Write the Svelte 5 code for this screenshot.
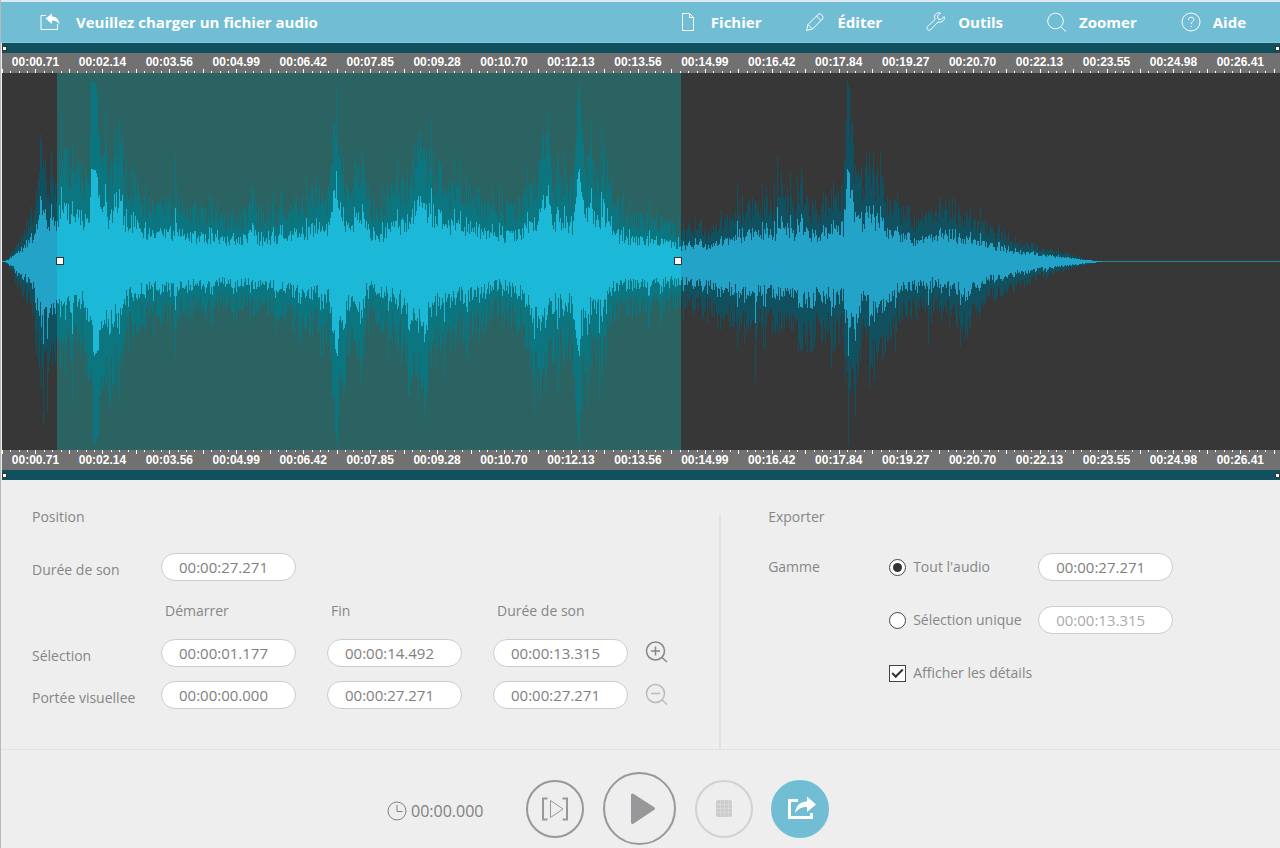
<script lang="ts">
  type Point = [number, number]

  const WIDTH = 1278
  const HEIGHT = 377
  const MIDDLE = 188

  let selection = $state({ start: 55, end: 679 })
  let range = $state('all')
  let details = $state(true)

  const menu = [
    { id: 'file', label: 'Fichier' },
    { id: 'edit', label: 'Éditer' },
    { id: 'tools', label: 'Outils' },
    { id: 'zoom', label: 'Zoomer' },
    { id: 'help', label: 'Aide' },
  ]

  const rulerLabels = [
    '00:00.71', '00:02.14', '00:03.56', '00:04.99', '00:06.42', '00:07.85', '00:09.28',
    '00:10.70', '00:12.13', '00:13.56', '00:14.99', '00:16.42', '00:17.84', '00:19.27',
    '00:20.70', '00:22.13', '00:23.55', '00:24.98', '00:26.41',
  ]

  // loudness envelope above the middle line: x, height
  const upper: Point[] = [
    [0, 0], [5, 1], [13, 7], [18, 12], [28, 26], [33, 32], [36, 56], [40, 66], [48, 44], [55, 48],
    [61, 70], [68, 60], [78, 52], [87, 48], [89, 92], [93, 91], [98, 74], [103, 62], [108, 48],
    [113, 70], [117, 74], [121, 52], [128, 44], [138, 48], [143, 34], [158, 32], [171, 32],
    [173, 54], [175, 32], [198, 29], [218, 26], [238, 24], [250, 36], [256, 25], [288, 32],
    [298, 35], [315, 38], [326, 38], [331, 72], [334, 90], [337, 70], [341, 62], [345, 36],
    [353, 48], [356, 64], [360, 56], [366, 32], [376, 28], [388, 38], [403, 46], [413, 60],
    [420, 70], [428, 58], [438, 50], [448, 42], [473, 40], [488, 30], [503, 30], [518, 34],
    [528, 44], [536, 52], [539, 80], [544, 70], [551, 46], [563, 50], [572, 42], [575, 86],
    [577, 92], [580, 68], [588, 62], [596, 48], [601, 62], [605, 54], [609, 36], [618, 28],
    [638, 24], [658, 26], [678, 18], [696, 19], [698, 28], [702, 17], [718, 22], [733, 26],
    [735, 42], [739, 30], [762, 34], [764, 42], [768, 32], [773, 33], [775, 56], [777, 33],
    [782, 44], [792, 34], [800, 40], [812, 30], [828, 38], [840, 32], [843, 54], [845, 92],
    [848, 86], [851, 68], [856, 52], [860, 38], [864, 64], [868, 60], [874, 50], [881, 44],
    [888, 27], [896, 34], [910, 22], [928, 28], [940, 26], [958, 27], [973, 24], [988, 18],
    [1008, 12], [1028, 9], [1048, 6], [1068, 4], [1083, 1], [1098, 0], [1278, 0],
  ]

  // the same below it
  const lower: Point[] = [
    [0, 0], [5, 1], [13, 9], [23, 20], [31, 34], [36, 58], [41, 66], [48, 60], [55, 54], [63, 58],
    [73, 56], [83, 44], [88, 76], [92, 94], [97, 86], [103, 68], [106, 78], [112, 62], [117, 60],
    [121, 44], [138, 36], [158, 32], [171, 32], [173, 50], [175, 30], [218, 26], [258, 27],
    [278, 32], [298, 38], [326, 40], [331, 80], [335, 94], [338, 58], [341, 80], [345, 48],
    [350, 36], [356, 60], [359, 62], [363, 34], [370, 30], [390, 44], [403, 48], [408, 82],
    [413, 58], [423, 66], [428, 60], [438, 48], [458, 42], [478, 40], [493, 28], [508, 30],
    [523, 44], [528, 62], [540, 72], [548, 50], [563, 58], [568, 44], [574, 80], [577, 94],
    [580, 62], [585, 80], [590, 46], [599, 62], [603, 54], [610, 30], [638, 28], [668, 24],
    [698, 25], [718, 30], [735, 36], [737, 50], [741, 36], [752, 36], [754, 64], [756, 36],
    [788, 38], [803, 52], [818, 40], [833, 46], [841, 38], [844, 70], [846, 94], [849, 52],
    [853, 86], [856, 60], [862, 40], [870, 66], [874, 52], [883, 54], [888, 40], [898, 32],
    [924, 26], [926, 48], [928, 26], [948, 28], [963, 38], [978, 28], [988, 22], [1008, 15],
    [1028, 11], [1048, 7], [1068, 4], [1088, 1], [1098, 0], [1278, 0],
  ]

  function envelope(points: Point[], x: number): number {
    const next = points.findIndex(p => p[0] > x)
    if (next < 1) return 0
    const [x0, y0] = points[next - 1]
    const [x1, y1] = points[next]
    return y0 + ((y1 - y0) * (x - x0)) / (x1 - x0)
  }

  function noise(n: number): number {
    const v = Math.sin(n * 127.1 + 11.7) * 43758.5453
    return v - Math.floor(v)
  }

  function level(points: Point[], x: number, seed: number): number {
    const base = envelope(points, x)
    const r = noise(x + seed)
    if (base > 86) return base
    if (base > 66) return base * (0.66 + 0.34 * r)
    const spike = noise(x * 3 + seed) > 0.86 ? 0.25 : 0
    return base * (0.58 + 0.45 * r + spike)
  }

  const columns = Array.from({ length: 1100 }, (_, x) => ({
    x,
    up: level(upper, x, 0),
    down: level(lower, x, 5000),
  }))

  function bars(from: number, to: number, scale: number): string {
    return columns
      .slice(from, to)
      .map(c => {
        const top = Math.round(MIDDLE - c.up * scale)
        const bottom = Math.round(MIDDLE + 1 + c.down * scale)
        return `M${c.x} ${top}h1V${bottom}h-1z`
      })
      .join('')
  }

  let parts = $derived([
    { kind: 'outside', from: 0, to: selection.start },
    { kind: 'inside', from: selection.start, to: selection.end },
    { kind: 'outside', from: selection.end, to: columns.length },
  ])

  const ticks = Array.from({ length: 153 }, (_, i) => ({
    x: Math.round((i * 66.94) / 8),
    size: i % 4 === 0 ? 4 : 2,
  }))
</script>

{#snippet icon(id: string)}
  <svg class="icon" viewBox="0 0 20 20" aria-hidden="true">
    {#if id === 'file'}
      <path d="M3.500 1.500h7l4 4v13h-11zM10.500 1.500v4h4" />
    {:else if id === 'edit'}
      <path d="M1.500 18.500l1.500-6L13 2.500q1.500-1.500 3 0l1.500 1.500q1.500 1.500 0 3L7.500 17zM3 12.500l4.500 4.500M11.500 4l4.500 4.500" />
    {:else if id === 'tools'}
      <path d="M18 4.500l-3 3-3-.5-.5-3 3-3c-3-1-6 1-6 4l.5 2.500-7.500 7c-2 2.500 1 5 3.500 3l7-7.500c4 1 7.500-2 6-5.500z" />
    {:else if id === 'zoom'}
      <circle cx="8.500" cy="9" r="7.800" />
      <path d="M14 15l5 4.500" />
    {:else if id === 'help'}
      <circle cx="10" cy="10" r="9" />
      <path d="M7.300 8c0-3.700 5.500-3.500 5.500-.3 0 2.300-2.700 2.100-2.700 4.300M10.100 13.800v1.400" />
    {/if}
  </svg>
{/snippet}

{#snippet ruler(bottom: boolean)}
  <div class="ruler" class:bottom>
    <svg class="ticks" viewBox="0 0 {WIDTH} 4" preserveAspectRatio="none" aria-hidden="true">
      {#each ticks as tick}
        <rect x={tick.x} y={bottom ? 0 : 4 - tick.size} width="1" height={tick.size} />
      {/each}
    </svg>
    {#each rulerLabels as label}
      <span>{label}</span>
    {/each}
  </div>
{/snippet}

<div class="app">
  <header>
    <button class="open">
      <svg class="icon" viewBox="0 0 20 20" aria-hidden="true">
        <path d="M6 3.500H1v14h16.500V12" />
        <path class="solid" d="M5.500 6.500L12 1.500v3c5 .5 7 3.500 7.500 8-2-3-4-4-7.500-4v3.500z" />
      </svg>
      Veuillez charger un fichier audio
    </button>
    <nav>
      {#each menu as item (item.id)}
        <button>{@render icon(item.id)}{item.label}</button>
      {/each}
    </nav>
  </header>

  <main>
    <div class="scroll"><i></i><i></i></div>
    {@render ruler(false)}
    <div class="wave">
      <svg viewBox="0 0 {WIDTH} {HEIGHT}" preserveAspectRatio="none" role="img" aria-label="Forme d'onde">
        <rect class="selected" x={selection.start} width={selection.end - selection.start} height={HEIGHT} />
        <rect class="silence" y={MIDDLE} width={WIDTH} height="1" />
        {#each parts as part}
          <g class={part.kind}>
            <path class="peak" d={bars(part.from, part.to, 1.96)} />
            <path class="body" d={bars(part.from, part.to, 1)} />
          </g>
        {/each}
      </svg>
      <span class="handle start" style:left="{(selection.start / WIDTH) * 100}%"></span>
      <span class="handle end" style:left="{(selection.end / WIDTH) * 100}%"></span>
    </div>
    {@render ruler(true)}
    <div class="scroll"><i></i><i></i></div>
  </main>

  <div class="panels">
    <section class="position">
      <h2>Position</h2>
      <label class="name" for="length">Durée de son</label>
      <input class="first" id="length" value="00:00:27.271" />
      <span class="column second">Démarrer</span>
      <span class="column">Fin</span>
      <span class="column">Durée de son</span>
      <label class="name" for="sel-start">Sélection</label>
      <input id="sel-start" value="00:00:01.177" />
      <input aria-label="Sélection, fin" value="00:00:14.492" />
      <input aria-label="Sélection, durée" value="00:00:13.315" />
      <button class="zoom" aria-label="Zoom avant">
        <svg viewBox="0 0 24 24" aria-hidden="true">
          <circle cx="10.500" cy="10" r="9" />
          <path d="M10.500 5.500v9M6 10h9M17 16.500l5 4.500" />
        </svg>
      </button>
      <label class="name" for="view-start">Portée visuellee</label>
      <input id="view-start" value="00:00:00.000" />
      <input aria-label="Portée, fin" value="00:00:27.271" />
      <input aria-label="Portée, durée" value="00:00:27.271" />
      <button class="zoom" aria-label="Zoom arrière" disabled>
        <svg viewBox="0 0 24 24" aria-hidden="true">
          <circle cx="10.500" cy="10.500" r="9" />
          <path d="M6 10.500h9M17 17l5 4.500" />
        </svg>
      </button>
    </section>

    <div class="divider"></div>

    <section class="export">
      <h2>Exporter</h2>
      <span>Gamme</span>
      <label><input type="radio" name="range" value="all" bind:group={range} />Tout l'audio</label>
      <input aria-label="Durée totale" value="00:00:27.271" />
      <label class="choice"><input type="radio" name="range" value="selection" bind:group={range} />Sélection unique</label>
      <input aria-label="Durée de la sélection" value="00:00:13.315" disabled={range === 'all'} />
      <label class="choice"><input type="checkbox" bind:checked={details} />Afficher les détails</label>
    </section>
  </div>

  <footer>
    <div class="side left">
      <span class="clock">
        <svg viewBox="0 0 20 20" aria-hidden="true">
          <circle cx="10" cy="10" r="9" />
          <path d="M10 4v6.500h5.500" />
        </svg>
        00:00.000
      </span>
      <button class="round" aria-label="Lire la sélection">
        <svg viewBox="0 0 58 58" aria-hidden="true">
          <path class="bracket" d="M21.500 18.500h-4.500v21h4.500M36.500 18.500h4.500v21h-4.500" />
          <path d="M24.500 20.500v17L37 29z" />
        </svg>
      </button>
    </div>
    <button class="round play" aria-label="Lire">
      <svg viewBox="0 0 73 73" aria-hidden="true">
        <path class="triangle" d="M29.500 23v27.500L50.500 36.500z" />
      </svg>
    </button>
    <div class="side">
      <button class="round stop" aria-label="Arrêter" disabled>
        <svg viewBox="0 0 58 58" aria-hidden="true">
          <rect class="solid" x="21" y="20" width="16" height="17" rx="2" />
          <path class="mesh" d="M25.500 20v17M29.500 20v17M33.500 20v17M21 24.500h16M21 28.500h16M21 32.500h16" />
        </svg>
      </button>
      <button class="round share" aria-label="Exporter">
        <svg viewBox="0 0 58 58" aria-hidden="true">
          <path class="frame" d="M27 20.500h-8.500v17h22V33" />
          <path class="solid" d="M24 33c1-7 4-11 12-11.500v-5l9 8-9 7.500v-5c-5 0-8.500 1.500-12 6z" />
        </svg>
      </button>
    </div>
  </footer>
</div>

<style>
  :global(body) {
    margin: 0;
    background: #eee;
  }

  .app {
    min-height: 100vh;
    box-sizing: border-box;
    border-left: 1px solid #b9b9b9;
    background: #eee;
    color: #868686;
    font: 14px/20px "Open Sans", "Noto Sans", sans-serif;
    display: flex;
    flex-direction: column;
  }

  button {
    padding: 0;
    border: none;
    background: none;
    color: inherit;
    font: inherit;
    cursor: pointer;
  }

  svg {
    display: block;
    fill: none;
    stroke: currentColor;
  }

  .solid {
    fill: currentColor;
    stroke: none;
  }

  header {
    display: flex;
    justify-content: space-between;
    align-items: center;
    height: 40px;
    padding: 0 34px 0 39px;
    border-top: 2px solid #dfe9f3;
    border-bottom: 1px solid #86c8da;
    background: #71bdd4;
    color: #fff;
    font-size: 15px;
    font-weight: 700;
  }

  header button {
    display: flex;
    align-items: center;
    gap: 12px;
    white-space: nowrap;
  }

  header .open { gap: 16px; }

  nav {
    display: flex;
    gap: 44px;
  }

  .icon {
    width: 20px;
    height: 20px;
    flex-shrink: 0;
  }

  main { margin-left: 1px; }

  .scroll {
    display: flex;
    justify-content: space-between;
    align-items: center;
    height: 10px;
    background: #11505f;
  }

  .scroll i {
    width: 3px;
    height: 3px;
    border: 1px solid #333;
    background: #fff;
  }

  .ruler {
    position: relative;
    display: flex;
    height: 20px;
    overflow: hidden;
    background: #717171;
    color: #fff;
    font: bold 12px/18px "Liberation Sans", Arial, sans-serif;
  }

  .ruler span {
    flex: 0 0 5.238%;
    text-align: center;
  }

  .ruler.bottom { line-height: 20px; }

  .ticks {
    position: absolute;
    left: 0;
    bottom: 0;
    width: 100%;
    height: 4px;
    fill: #fff;
    stroke: none;
  }

  .bottom .ticks {
    top: 0;
    bottom: auto;
  }

  .wave {
    position: relative;
    background: #373737;
  }

  .wave svg {
    width: 100%;
    height: 377px;
    stroke: none;
    shape-rendering: crispEdges;
  }

  .selected { fill: #2b6363; }
  .outside .peak { fill: #11505f; }
  .outside .body { fill: #23a3c8; }
  .inside .peak { fill: #0c7680; }
  .inside .body { fill: #1cb8d8; }
  .silence { fill: #23888f; }

  .handle {
    position: absolute;
    top: 50%;
    width: 6px;
    height: 6px;
    margin-top: -5px;
    border: 1px solid #333;
    background: #fff;
    cursor: ew-resize;
  }

  .handle.start { margin-left: -1px; }
  .handle.end { margin-left: -7px; }

  .panels {
    display: flex;
    border-bottom: 1px solid #e2e2e2;
  }

  h2 {
    grid-column: 1 / -1;
    margin: 0;
    font-size: 14px;
    font-weight: 400;
  }

  section {
    display: grid;
    align-items: center;
    align-content: start;
    justify-content: start;
    padding-top: 17px;
    white-space: nowrap;
  }

  .position {
    flex: 0 0 56.150%;
    box-sizing: border-box;
    grid-template-columns: 129px 166px 166px 152px auto;
    grid-template-rows: 40px 60px 28px 56px 28px;
    padding-bottom: 40px;
    padding-left: 31px;
  }

  .divider {
    width: 2px;
    margin-top: 34px;
    background: #e2e2e2;
  }

  .name {
    grid-column: 1;
    padding-top: 6px;
  }

  .first { grid-column: 2 / -1; }
  .column { padding-left: 4px; }
  .second { grid-column: 2; }

  section input:not([type]) {
    width: 135px;
    height: 28px;
    box-sizing: border-box;
    padding: 0 17px;
    border: 1px solid #ccc;
    border-radius: 14px;
    background: #fff;
    color: #808080;
    font: inherit;
    font-size: 15px;
  }

  section input:not([type]):disabled { color: #aaa; }

  .zoom svg {
    width: 24px;
    height: 24px;
    stroke-width: 1.500;
  }

  .zoom:disabled { color: #bbb; }

  .export {
    flex: 1;
    grid-template-columns: 121px 149px auto;
    grid-template-rows: 40px 60px 46px 60px;
    padding-left: 47px;
  }

  .export label {
    display: flex;
    align-items: center;
    gap: 7px;
  }

  .choice { grid-column: 2; }

  input[type='radio'],
  input[type='checkbox'] {
    appearance: none;
    display: grid;
    place-items: center;
    width: 17px;
    height: 17px;
    box-sizing: border-box;
    margin: 0;
    border: 1px solid #444;
    background: #fff;
  }

  input[type='radio'] { border-radius: 50%; }

  input[type='radio']:checked::before {
    content: '';
    width: 9px;
    height: 9px;
    border-radius: 50%;
    background: #333;
  }

  input[type='checkbox']:checked::before {
    content: '';
    width: 9px;
    height: 4px;
    margin-bottom: 3px;
    border: solid #333;
    border-width: 0 0 2px 2px;
    transform: rotate(-45deg);
  }

  footer {
    display: grid;
    grid-template-columns: 1fr auto 1fr;
    align-items: center;
    gap: 19px;
    padding: 22px 3px 3px 0;
    color: #98989a;
  }

  .side {
    display: flex;
    align-items: center;
    gap: 18px;
  }

  .left {
    justify-content: flex-end;
    gap: 42px;
  }

  .clock {
    display: flex;
    align-items: center;
    gap: 4px;
    padding-top: 4px;
    color: #808080;
    font-size: 16px;
  }

  .clock svg {
    width: 20px;
    height: 20px;
  }

  .round {
    width: 58px;
    height: 58px;
    box-sizing: border-box;
    border: 2px solid #98989a;
    border-radius: 50%;
  }

  .round svg {
    width: 58px;
    height: 58px;
    margin: -2px;
  }

  .bracket { stroke-width: 2; }
  .frame { stroke-width: 3; }

  .triangle {
    fill: currentColor;
    stroke-width: 3;
    stroke-linejoin: round;
  }

  .play,
  .play svg {
    width: 73px;
    height: 73px;
  }

  .stop {
    border-color: #d2d2d2;
    color: #ccc;
  }

  .mesh {
    stroke: #d8d8d8;
    stroke-width: 1;
  }

  .share {
    border-color: #71bdd4;
    background: #71bdd4;
    color: #fff;
  }
</style>
